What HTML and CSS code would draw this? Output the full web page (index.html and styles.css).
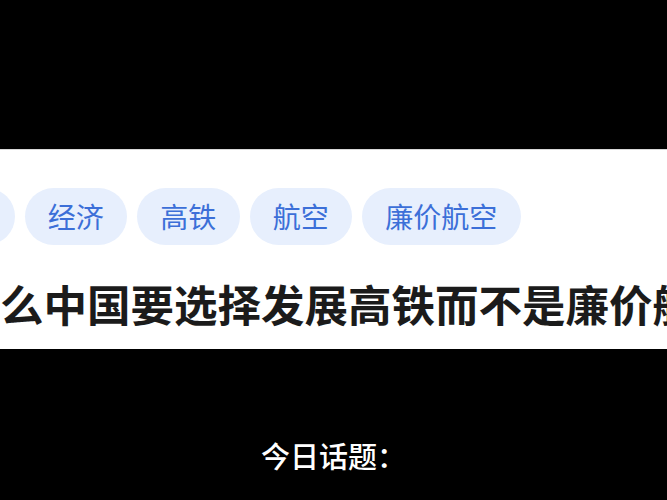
FILE: index.html
```html
<!DOCTYPE html>
<html lang="zh-CN">
<head>
<meta charset="utf-8">
<link rel="stylesheet" href="styles.css">
</head>
<body>
<div class="screen">
  <section class="card">
    <div class="tags">
      <span class="tag">交通</span>
      <span class="tag">经济</span>
      <span class="tag">高铁</span>
      <span class="tag">航空</span>
      <span class="tag">廉价航空</span>
    </div>
    <h1 class="title">为什么中国要选择发展高铁而不是廉价航空</h1>
  </section>
  <p class="caption">今日话题：</p>
</div>
</body>
</html>
```
FILE: styles.css
```css
html, body {
  margin: 0;
  padding: 0;
  background: #000;
}
.screen {
  width: 667px;
  height: 500px;
  overflow: hidden;
  background: #000;
  display: flex;
  flex-direction: column;
  font-family: "Noto Sans CJK SC", "Noto Sans", sans-serif;
}
.card {
  margin-top: 149px;
  height: 200px;
  box-sizing: border-box;
  background: #fff;
  border-top: 1px solid #d8d8d8;
  padding: 38px 0 0 0;
  display: flex;
  flex-direction: column;
  overflow: hidden;
}
.tags {
  display: flex;
  gap: 10px;
  margin-left: -88px;
  white-space: nowrap;
}
.tag {
  flex: none;
  height: 57px;
  padding: 0 23.25px;
  border-radius: 29px;
  background: #e7effd;
  color: #3c6fd8;
  font-size: 28px;
  line-height: 57px;
}
.title {
  margin: 35px 0 0 -87px;
  font-size: 43.5px;
  line-height: 48px;
  font-weight: 700;
  color: #1b1b1b;
  white-space: nowrap;
}
.caption {
  margin: 88px 0 0 0;
  text-align: center;
  color: #fff;
  font-size: 29px;
  font-weight: 500;
  line-height: 36px;
}
```
